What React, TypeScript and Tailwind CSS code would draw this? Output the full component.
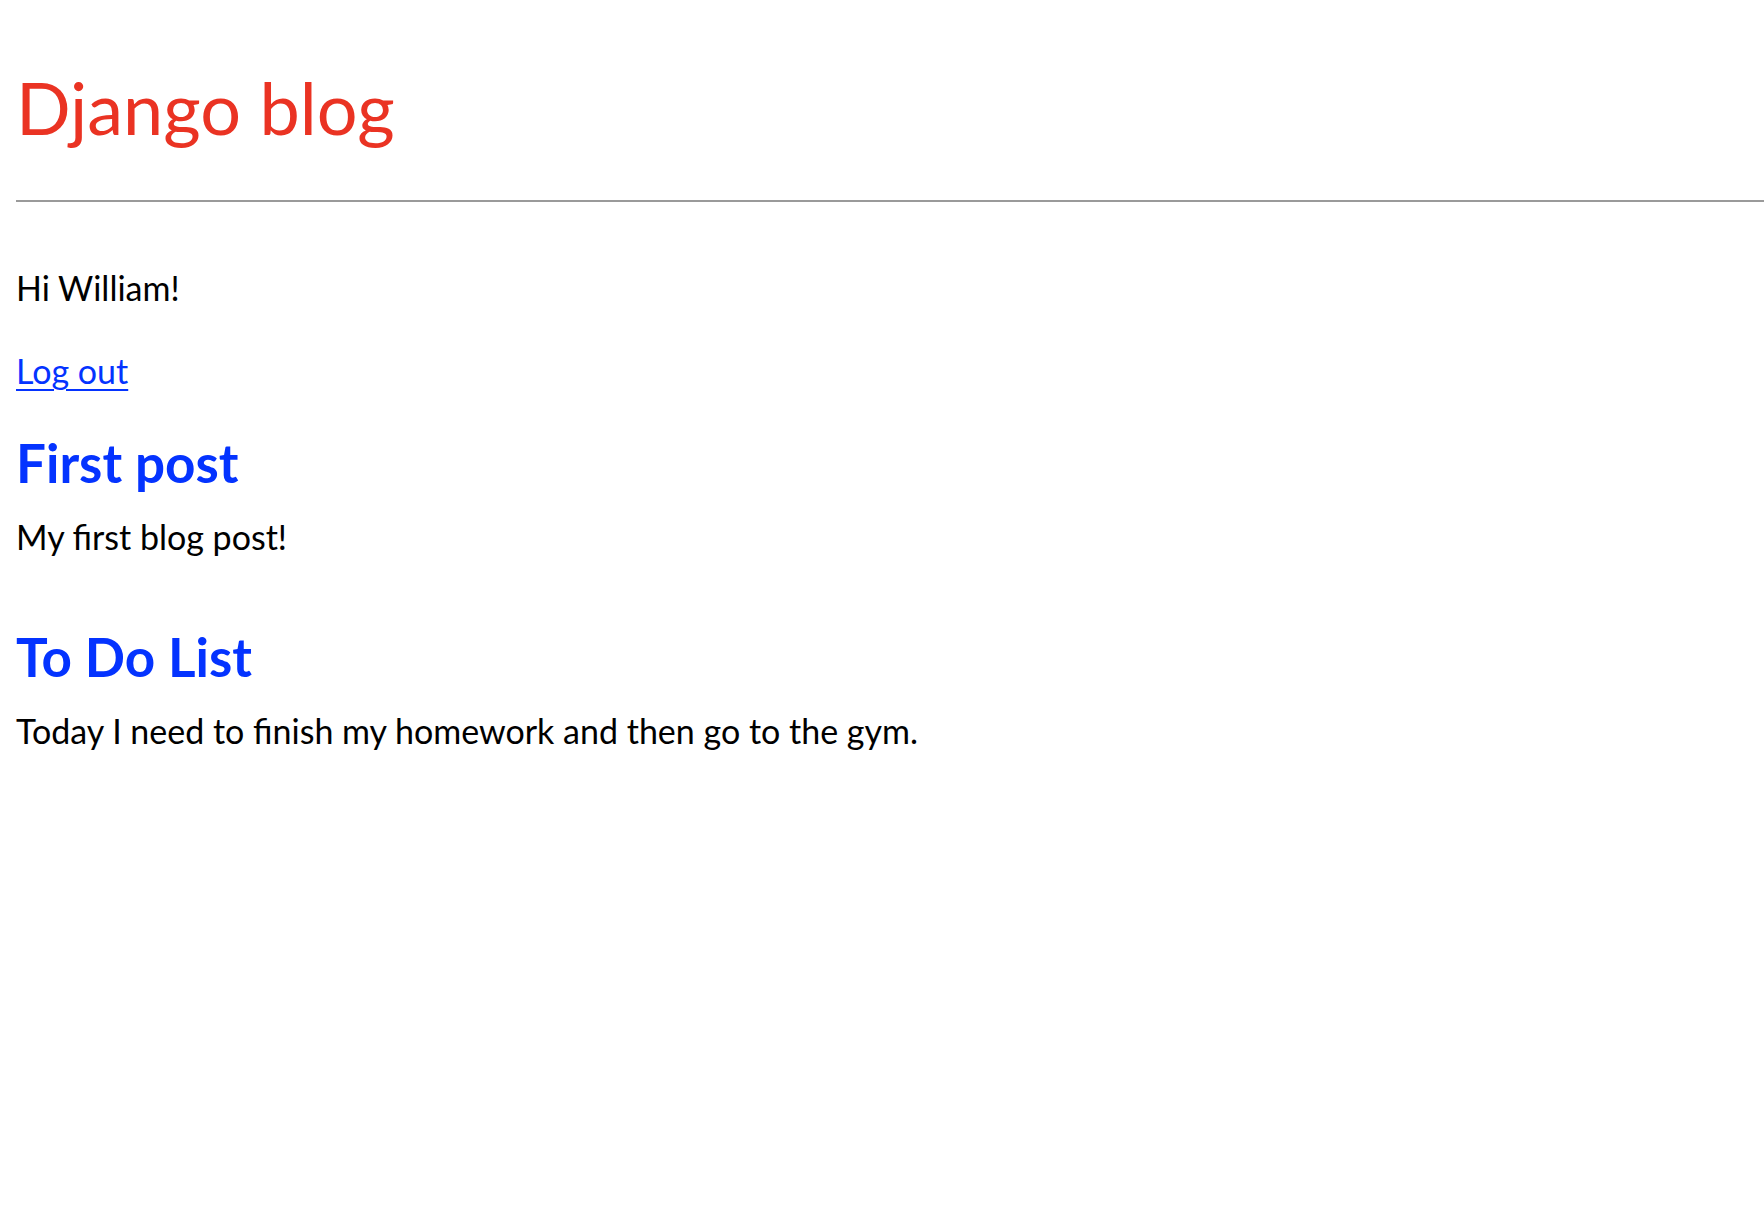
const posts = [
  { title: "First post", text: "My first blog post!", gap: "mt-[38px]" },
  { title: "To Do List", text: "Today I need to finish my homework and then go to the gym.", gap: "mt-[66px]" },
];

export default function App() {
  return (
    <div className="min-h-screen bg-white pl-4 font-['Lato','Open_Sans',sans-serif] text-black">
      {/* Header */}
      <header>
        <h1 className="pt-[63px] text-[72px] leading-[88px] text-[#ea3323]">Django blog</h1>
      </header>
      <hr className="mt-[49px] border-0 h-[2px] bg-[#9a9a9a]" />

      <p className="mt-[65px] text-[34px] leading-[42px]">Hi William!</p>
      <p className="mt-[41px] text-[34px] leading-[42px]">
        <a href="#" className="text-[#0433ff] underline underline-offset-[5px] decoration-2">
          Log out
        </a>
      </p>

      {/* Posts */}
      {posts.map((post, i) => (
        <div key={i} className={post.gap}>
          <h2 className="text-[53px] leading-[66px] font-bold text-[#0433ff]">
            <a href="#">{post.title}</a>
          </h2>
          <p className="mt-[20px] text-[34px] leading-[42px]">{post.text}</p>
        </div>
      ))}
    </div>
  );
}
